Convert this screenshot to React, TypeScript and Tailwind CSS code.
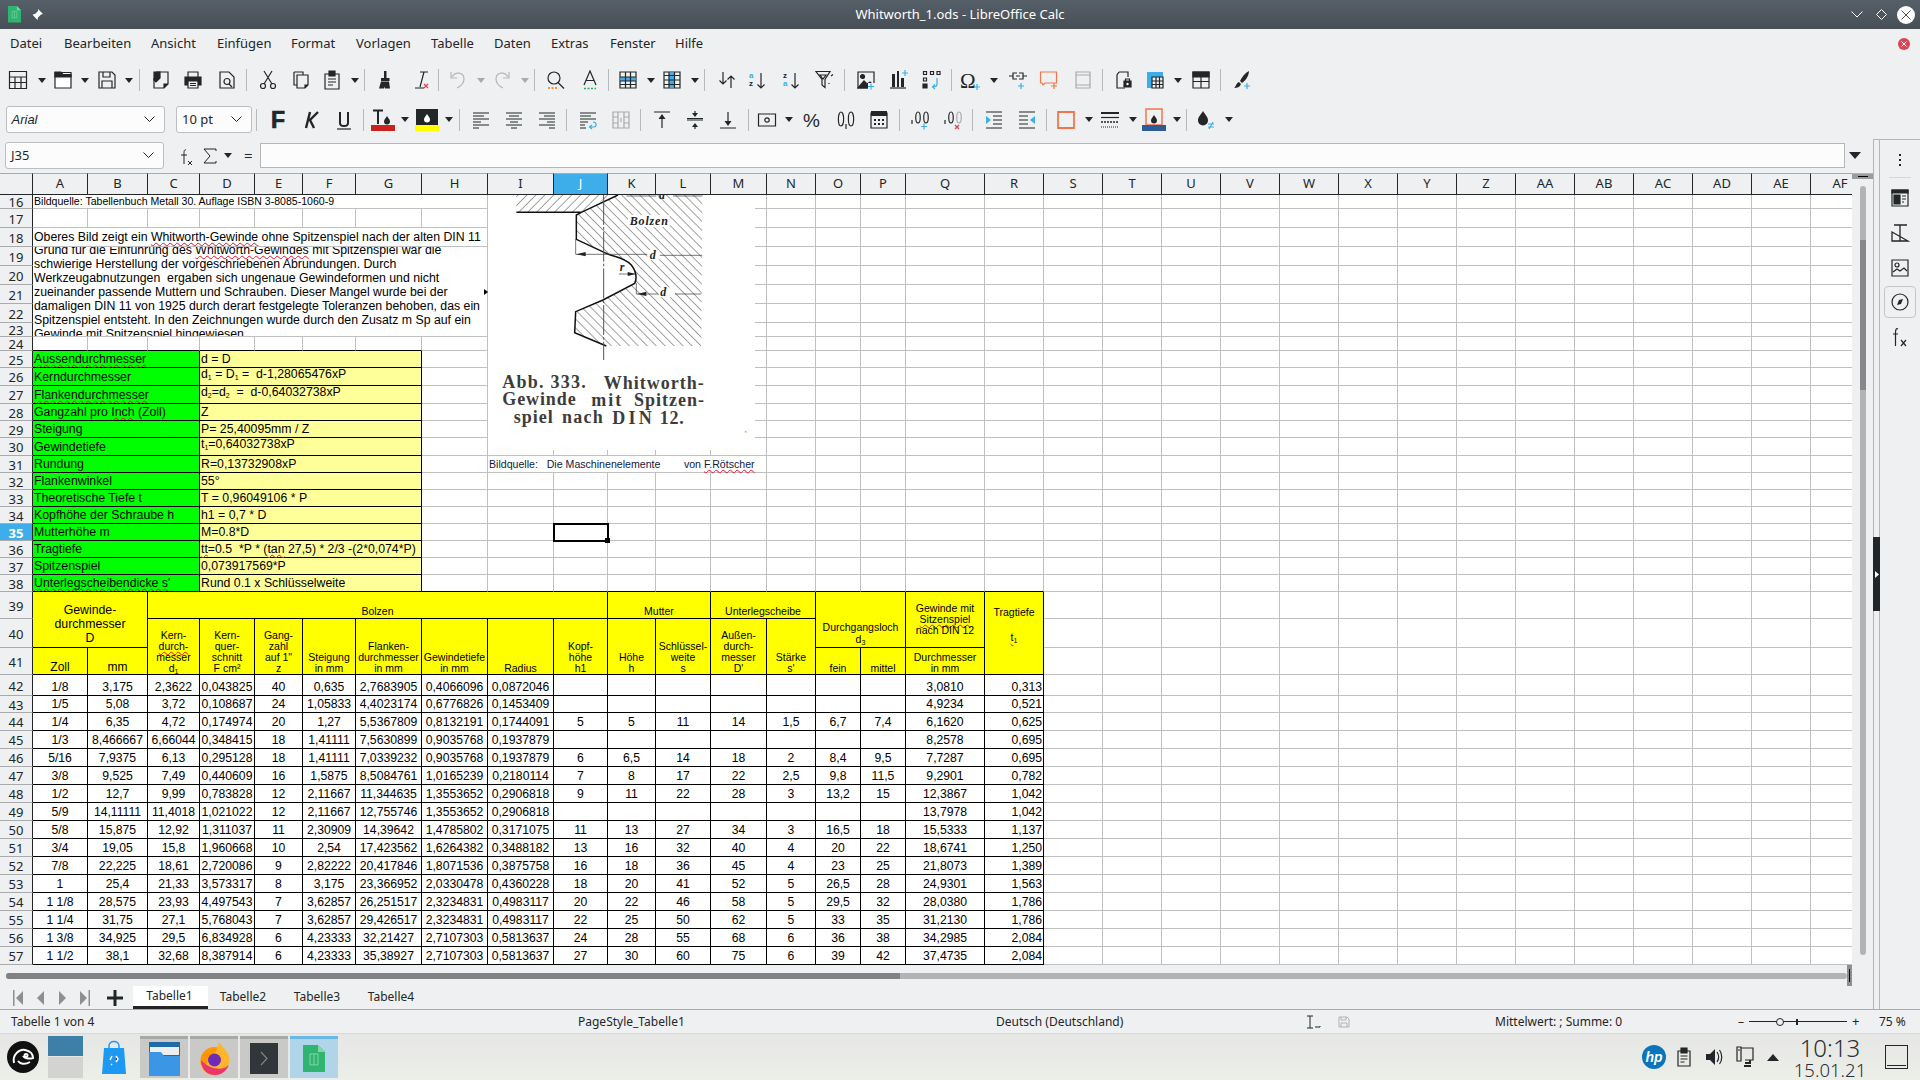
import React from "react";

const D = "#232629";
const B = "#3daee9";
const Svg = ({ children, w = 20, h = 20, vb }: { children?: React.ReactNode; w?: number; h?: number; vb?: string }) => (
  <svg width={w} height={h} viewBox={vb || `0 0 ${w} ${h}`} fill="none" stroke={D} strokeWidth={1.2} className="block shrink-0">
    {children}
  </svg>
);
const Plus = ({ x = 16, y = 16, c = B }: { x?: number; y?: number; c?: string }) => (
  <path d={`M${x - 3} ${y}h6M${x} ${y - 3}v6`} stroke={c} strokeWidth={1.2} />
);
const RedX = ({ x = 16, y = 17 }: { x?: number; y?: number }) => (
  <path d={`M${x - 2} ${y - 2}l4 4M${x + 2} ${y - 2}l-4 4`} stroke="#da4453" strokeWidth={1.3} />
);
const Arrow = () => (
  <svg width="8" height="5" viewBox="0 0 8 5" className="block"><path d="M0 0h8L4 5z" fill={D} /></svg>
);
const Sep = () => <div className="w-px h-[22px] bg-[#b7b9bb]" />;
const Drop = ({ x = 10, y = 9, c = D }: { x?: number; y?: number; c?: string }) => (
  <path d={`M${x} ${y}c-2 3 -3 4 -3 5.500a3 3 0 0 0 6 0c0-1.500 -1 -2.500 -3 -5.500z`} fill={c} stroke="none" />
);

const icons = {
  table: <Svg><path d="M1.500 1.500h17v17h-17zM1.500 7h17M1.500 12.500h17M7 7v11.500M13 7v11.500" /></Svg>,
  open: <Svg><path d="M2 2.500h16v15.500H2z" fill="#fff" /><path d="M2 2h6l2 2.500h8V7H2z" fill={D} /></Svg>,
  save: <Svg><path d="M2 2h13l3 3v13H2zM6 2v5h7V2M5 18v-7h10v7" /></Svg>,
  exportDoc: <Svg><path d="M5 2h12v12l-4 4H3V8" /><path d="M3 2h6v6l-4 4-2-2z" fill={D} /><path d="M13 18v-4h4" fill={D} /></Svg>,
  print: <Svg><path d="M5 7V2h10v5" /><path d="M2 7h16v8H2z" fill={D} /><path d="M5 11h10v7H5z" fill="#eff0f1" /><path d="M7 13.500h6M7 15.500h6" strokeWidth={1} /></Svg>,
  preview: <Svg><path d="M3 2h9l5 5v11H3z" /><circle cx="10" cy="11.500" r="3" /><path d="M12 14l3 3" /></Svg>,
  cut: <Svg><circle cx="5" cy="16" r="2.500" /><circle cx="15" cy="16" r="2.500" /><path d="M6 14L14 1M14 14L6 1" /></Svg>,
  copy: <Svg><path d="M3 2h9v3M3 2v13h3" /><path d="M6 5h11v10l-3 3H6z" fill="#eff0f1" /><path d="M14 18v-3h3" fill={D} /></Svg>,
  paste: <Svg><path d="M3 4h14v15H3z" /><path d="M7 1h6v5H7z" fill={D} /><path d="M6 9h8M6 12h8M6 15h5" /></Svg>,
  clone: <Svg><path d="M9 1h2.500v7H9z" fill={D} stroke="none" /><path d="M6 8h8.500v3H6z" fill={D} stroke="none" /><path d="M6 11.500L4 18.500h5l.5-2 .5 2h5l-1-7z" fill={D} stroke="none" /></Svg>,
  clear: <Svg><path d="M10 2h8M14 2l-4 15M5 18h9" /><RedX x={16} y={16} /></Svg>,
  undo: <Svg><path d="M4 7c3-6 12-5 12 2 0 4-3 7-7 9" stroke="#b5b7b9" /><path d="M3 2v6h6" stroke="#b5b7b9" /></Svg>,
  redo: <Svg><path d="M16 7c-3-6-12-5-12 2 0 4 3 7 7 9" stroke="#b5b7b9" /><path d="M17 2v6h-6" stroke="#b5b7b9" /></Svg>,
  find: <Svg><circle cx="8" cy="8" r="6" /><path d="M12 12.500l6 6" /><path d="M2 18h9" stroke="#f67400" strokeDasharray="2 1.500" strokeWidth={1.5} /></Svg>,
  spell: <Svg><path d="M4 15L10 1l6 14M6 10.500h8" /><path d="M4 18.500h12" stroke="#27ae60" strokeDasharray="2 1.500" strokeWidth={1.6} /></Svg>,
  rows: <Svg><path d="M2 2h16v16H2z" /><path d="M2.500 7h15v4h-15z" fill={B} stroke="none" /><path d="M2 7h16M2 11h16M2 14.500h16M7.500 2v16M12.500 2v16" /></Svg>,
  cols: <Svg><path d="M2 2h16v16H2z" /><path d="M7 2.500h5v15H7z" fill={B} stroke="none" /><path d="M7 2v16M12.500 2v16M2 5.500h16M2 10h16M2 14.500h16" /></Svg>,
  sort: <Svg><path d="M6 2v12M2.500 10.500L6 14l3.500-3.500M14 18V6M10.500 9.500L14 6l3.500 3.500" /></Svg>,
  sortAsc: <Svg><text x="1" y="8" fontSize="8" fill={B} stroke="none" fontFamily="Liberation Sans" fontWeight="700">a</text><text x="1" y="16" fontSize="8" fill={D} stroke="none" fontFamily="Liberation Sans" fontWeight="700">z</text><path d="M13 3v15M9.500 14.500L13 18l3.500-3.500" /></Svg>,
  sortDesc: <Svg><text x="1" y="8" fontSize="8" fill={D} stroke="none" fontFamily="Liberation Sans" fontWeight="700">z</text><text x="1" y="16" fontSize="8" fill={B} stroke="none" fontFamily="Liberation Sans" fontWeight="700">a</text><path d="M13 3v15M9.500 14.500L13 18l3.500-3.500" /></Svg>,
  filter: <Svg><path d="M1 1.500h14l-5 8v8l-3-2.500V9.500z" /><path d="M5 5h6l-3 4z" /><path d="M16 6l2-1.500M14 13v1" stroke="#232629" /></Svg>,
  image: <Svg><path d="M2 2h16v16H2z" /><circle cx="6.500" cy="6.500" r="2" fill={D} /><path d="M2 18l6-7 3 3 3-2 4 4v2z" fill={D} /><path d="M12 13h7v7h-7z" fill="#eff0f1" stroke="none" /><Plus x={15} y={16.500} /></Svg>,
  chart: <Svg><path d="M3 4h3v13H3zM8 1h2v16H8zM12 8h3v9h-3z" fill={D} stroke="none" /><path d="M1 18h16" /><Plus x={16} y={3} /></Svg>,
  pivot: <Svg><path d="M1.500 1.500h3v3h-3zM8.500 1.500h3v3h-3zM15 1.500h3v3h-3zM1.500 8h3v3h-3z" /><path d="M1 14h4v4H1z" fill={D} /><path d="M15 8v6c0 2-2 3-4 3M13 14.500l-2.500 2.500 2.500 2" stroke={B} /></Svg>,
  omega: <Svg><text x="0" y="18" fontSize="21" fill={D} stroke="none" fontFamily="Liberation Serif">Ω</text><Plus x={17} y={17} /></Svg>,
  link: <Svg><path d="M1 6h4M15 6h4" /><path d="M9 3H5v6h4M11 3h4v6h-4M8 6h4" /><Plus x={13} y={16} /></Svg>,
  comment: <Svg><path d="M1.500 2h16v11H6l-2 2-1-2H1.500z" stroke="#f2764b" /><Plus x={15} y={16} c="#f2764b" /></Svg>,
  hf: <Svg><path d="M3 2h14v16H3zM3 5h14M3 15h14" stroke="#a8aaac" /></Svg>,
  area: <Svg><path d="M5 2h9v5M5 2L3 5v13h8" /><path d="M10 11h7v6h-7z" fill={D} /><circle cx="13.500" cy="14" r="1.200" fill="#fff" stroke="none" /><path d="M11.500 11V9h4v2" /></Svg>,
  tblue: <Svg><path d="M2 2h16v5H7v11H2z" fill={B} stroke="none" /><path d="M7 7h11v11H7zM7 11h11M7 14.500h11M11 7v11M14.500 7v11" /></Svg>,
  freeze: <Svg><path d="M2 2h16v16H2z" /><path d="M2 2h16v5H2z" fill={D} /><path d="M2 11.500h16M10 7v11" /></Svg>,
  brush: <Svg><path d="M17 1C13 3 10 7 8 11l2 2c3-2 7-7 7-12z" fill={D} stroke="none" /><path d="M7 12l2 2c-1 3-4 4-7 4 2-1 2-5 5-6z" fill={D} stroke="none" /><Plus x={15} y={16} /></Svg>,
  bold: <Svg><text x="3" y="18" fontSize="23" fontWeight="900" fill={D} stroke={D} strokeWidth={0.7} fontFamily="Liberation Sans">F</text></Svg>,
  ital: <Svg><path d="M8 2L4 18M16 2L8 10l4 8" strokeWidth={2.4} /></Svg>,
  und: <Svg><path d="M6 2v11c0 4 8 4 8 0V2" strokeWidth={2} /><path d="M3 19h14" /></Svg>,
  fcol: <svg width="24" height="22" viewBox="0 0 24 22" fill="none" className="block"><path d="M2 1.500h10M7 1.500V15" stroke={D} strokeWidth={2} /><Drop x={16} y={7} /><path d="M0 16h24v6H0z" fill="#c9211e" /></svg>,
  hcol: <svg width="24" height="22" viewBox="0 0 24 22" fill="none" className="block"><path d="M1 0h22v16H1z" fill={D} /><Drop x={12} y={5} c="#fff" /><path d="M0 16h24v6H0z" fill="#ffff00" /></svg>,
  al: <Svg><path d="M2 3h16M2 6h11M2 9h16M2 12h8M2 15h16M2 18h6" /></Svg>,
  ac: <Svg><path d="M2 3h16M5 6h10M2 9h16M6 12h8M2 15h16M7 18h6" /></Svg>,
  ar: <Svg><path d="M2 3h16M7 6h11M2 9h16M10 12h8M2 15h16M12 18h6" /></Svg>,
  wrap: <Svg><path d="M2 3h16M2 6h11M2 9h16M2 12h8M2 15h5M2 18h6" /><path d="M12 17h4c3 0 3-5-1-5M14 15l-2.500 2 2.500 2" stroke={B} /></Svg>,
  merge: <Svg><path d="M2 2h16v16H2zM2 7h5M13 7h5M2 13h5M13 13h5M7 2v16M13 2v16M10 8v4" stroke="#a8aaac" /></Svg>,
  vt: <Svg><path d="M2 2h16M10 18V6" /><path d="M10 4l-3.500 5h7z" fill={D} stroke="none" /></Svg>,
  vc: <Svg><path d="M2 10h16M2 8.500h16M10 1v3M10 19v-3" /><path d="M10 7L7 3h6zM10 13l-3 4h6z" fill={D} stroke="none" /></Svg>,
  vb: <Svg><path d="M2 18h16M10 2v12" /><path d="M10 16l-3.500-5h7z" fill={D} stroke="none" /></Svg>,
  cur: <Svg><path d="M1.500 4h17v12h-17z" /><circle cx="10" cy="10" r="2.200" /></Svg>,
  pct: <Svg w={20} h={20}><text x="0" y="17" fontSize="19" fill={D} stroke="none" fontFamily="Liberation Sans">%</text></Svg>,
  zero: <Svg><path d="M5 2c-3.500 0-3.500 14 0 14s3.500-14 0-14zM15 2c-3.500 0-3.500 14 0 14s3.500-14 0-14zM10 14v5" /></Svg>,
  date: <Svg><path d="M2 3h16v15H2z" /><path d="M2 1h16v5H2z" fill={D} stroke="none" /><path d="M5 9h2v2H5zM9 9h2v2H9zM13 9h2v2h-2zM5 13h2v2H5zM9 13h2v2H9zM13 13h2v2h-2z" fill={D} stroke="none" /></Svg>,
  addD: <Svg><path d="M8 2c-3 0-3 11 0 11s3-11 0-11zM16 2c-3 0-3 11 0 11s3-11 0-11zM2 10v4" /><Plus x={14} y={16.500} /></Svg>,
  remD: <Svg><path d="M8 2c-3 0-3 11 0 11s3-11 0-11z" /><path d="M16 2c-3 0-3 11 0 11s3-11 0-11z" stroke="#a8aaac" /><path d="M2 10v4" /><RedX x={14} y={17} /></Svg>,
  ind: <Svg><path d="M2 2h16M9 6h9M9 10h9M9 14h9M2 18h16" /><path d="M2 6l5 4-5 4z" fill={B} stroke="none" /></Svg>,
  out: <Svg><path d="M2 2h16M2 6h9M2 10h9M2 14h9M2 18h16" /><path d="M18 6l-5 4 5 4z" fill={B} stroke="none" /></Svg>,
  border: <Svg><path d="M2 2h16v16H2z" stroke="#f2764b" strokeWidth={1.800} /></Svg>,
  bstyle: <Svg><path d="M1 3h18" strokeWidth={2} /><path d="M1 7.500h18" /><path d="M1 12h18" strokeDasharray="2 1" strokeWidth={1.400} /><path d="M1 17h18" strokeDasharray="1 1" /></Svg>,
  bcol: <svg width="24" height="24" viewBox="0 0 24 24" fill="none" className="block"><path d="M4 1h16v16H4z" stroke="#f2764b" strokeWidth={1.500} /><Drop x={12} y={7} /><path d="M0 17h24v6H0z" fill="#2a5d96" /></svg>,
  cond: <Svg><path d="M8 1c-3 5-5 6-5 9.500a5 5 0 0 0 10 0C13 7 11 6 8 1z" fill={D} stroke="none" /><path d="M13 14h6M13 17h6M18 12l-4 7" stroke={B} /></Svg>,
};

type Item = [number, React.ReactNode, number?];
const Bar = ({ items, h }: { items: Item[]; h: string }) => {
  let right = 0;
  return (
    <div className={`flex items-center ${h}`}>
      {items.map(([cx, node, w = 20], i) => {
        const left = cx - w / 2;
        const ml = left - right;
        right = left + w;
        return (
          <div key={i} className="flex justify-center items-center shrink-0" style={{ width: w, marginLeft: ml }}>
            {node}
          </div>
        );
      })}
    </div>
  );
};
const a = <Arrow />;
const s = <Sep />;
const Combo = ({ text, italic }: { text: string; italic?: boolean }) => (
  <div className="h-[27px] w-full bg-[#fcfcfc] border border-[#bcbebf] rounded-[3px] flex items-center justify-between pl-[5px] pr-[9px]">
    <span className={`text-[13px] text-[#232629] ${italic ? "italic font-['Liberation_Sans',sans-serif]" : ""}`}>{text}</span>
    <svg width="11" height="7" viewBox="0 0 11 7" fill="none" stroke={D} strokeWidth={1}><path d="M0.500 0.500l5 5 5-5" /></svg>
  </div>
);

const grayArrow = <svg width="8" height="5" viewBox="0 0 8 5" className="block"><path d="M0 0h8L4 5z" fill="#a8aaac" /></svg>;
const t1: Item[] = [
  [18, icons.table], [42, a, 8], [62.5, icons.open], [85, a, 8], [107, icons.save], [129, a, 8], [139, s, 1],
  [161, icons.exportDoc], [193, icons.print], [227, icons.preview], [246.5, s, 1], [268, icons.cut], [301, icons.copy],
  [332, icons.paste], [355, a, 8], [364, s, 1], [385, icons.clone], [420, icons.clear], [438, s, 1], [458, icons.undo],
  [481, grayArrow, 8], [502, icons.redo], [525, grayArrow, 8],
  [534, s, 1], [556, icons.find], [590, icons.spell], [608, s, 1], [628, icons.rows], [650.5, a, 8], [672, icons.cols], [695, a, 8],
  [704.5, s, 1], [726.5, icons.sort], [758, icons.sortAsc], [792, icons.sortDesc], [824.5, icons.filter], [844.5, s, 1],
  [866, icons.image], [899, icons.chart], [932, icons.pivot], [951, s, 1], [970, icons.omega], [993.5, a, 8], [1017.5, icons.link],
  [1049, icons.comment], [1083, icons.hf], [1102.5, s, 1], [1124, icons.area], [1155, icons.tblue], [1177.5, a, 8], [1201, icons.freeze],
  [1220, s, 1], [1242, icons.brush],
];
const t2: Item[] = [
  [85, <Combo text="Arial" italic />, 159], [214, <Combo text="10 pt" />, 76], [256, s, 1], [277.5, icons.bold], [312, icons.ital], [344, icons.und],
  [363, s, 1], [383, icons.fcol, 24], [405, a, 8], [427, icons.hcol, 24], [449, a, 8], [459, s, 1], [481, icons.al], [514, icons.ac], [547, icons.ar],
  [566.5, s, 1], [588, icons.wrap], [621, icons.merge], [640, s, 1], [661.5, icons.vt], [695, icons.vc], [728, icons.vb], [748, s, 1], [766.5, icons.cur],
  [789, a, 8], [813, icons.pct], [846, icons.zero], [879, icons.date], [899, s, 1], [919.5, icons.addD], [953, icons.remD], [972.5, s, 1], [994, icons.ind],
  [1027, icons.out], [1046.5, s, 1], [1066, icons.border], [1088.5, a, 8], [1110, icons.bstyle], [1132.5, a, 8], [1154, icons.bcol, 24], [1177, a, 8],
  [1186.5, s, 1], [1205, icons.cond], [1228.5, a, 8],
];

const menus: [string, number][] = [["Datei", 54], ["Bearbeiten", 87], ["Ansicht", 66], ["Einfügen", 74], ["Format", 65], ["Vorlagen", 75], ["Tabelle", 63], ["Daten", 57], ["Extras", 59], ["Fenster", 65], ["Hilfe", 50]];

const cols = ["A","B","C","D","E","F","G","H","I","J","K","L","M","N","O","P","Q","R","S","T","U","V","W","X","Y","Z","AA","AB","AC","AD","AE","AF"];

const W = ({ children }: { children: React.ReactNode }) => (
  <span className="underline decoration-wavy decoration-[#e8102a] decoration-1 underline-offset-[1px] [text-decoration-skip-ink:none]">{children}</span>
);
const Sb = ({ children }: { children: React.ReactNode }) => <sub className="text-[7px]">{children}</sub>;

type Cell = { r: number; c: number; rs?: number; cs?: number; cls?: string; n?: React.ReactNode };
const SANS = "font-['Liberation_Sans',sans-serif]";
const Y = "bg-[#ffff00] border-r border-b border-black";
const hdr = `${Y} flex items-end justify-center text-center text-[10.5px] leading-[11px] text-black`;
const Lines = ({ t }: { t: React.ReactNode[] }) => (
  <div>{t.map((x, i) => <div key={i}>{x}</div>)}</div>
);

const cells: Cell[] = [];
const add = (r: number, c: number, n?: React.ReactNode, cls?: string, cs?: number, rs?: number) => cells.push({ r, c, n, cls, cs, rs });

add(16, 0, <span className="text-[10.55px]">Bildquelle: Tabellenbuch Metall 30. Auflage ISBN 3-8085-1060-9</span>, "border-r border-b border-[#c0c0c0] flex items-center pl-[1px] whitespace-nowrap", 8);
add(18, 0, <span><span>Oberes Bild zeigt ein </span><W>Whitworth-Gewinde</W> ohne Spitzenspiel nach der alten DIN 11</span>, "border-r border-b border-[#c0c0c0] flex items-center pl-[1px] whitespace-nowrap text-[12.3px] leading-[16px]", 8);
add(19, 0, (
  <div className="text-[12.3px] leading-[14px] whitespace-nowrap">
    <div>Grund für die Einführung des <W>Whitworth-Gewindes</W> mit Spitzenspiel war die</div>
    <div>schwierige Herstellung der vorgeschriebenen Abrundungen. Durch</div>
    <div>Werkzeugabnutzungen&nbsp; ergaben sich ungenaue Gewindeformen und nicht</div>
    <div>zueinander passende Muttern und Schrauben. Dieser Mangel wurde bei der</div>
    <div>damaligen DIN 11 von 1925 durch derart festgelegte Toleranzen behoben, das ein</div>
    <div>Spitzenspiel entsteht. In den Zeichnungen wurde durch den Zusatz m Sp auf ein</div>
    <div>Gewinde mit Spitzenspiel hingewiesen.</div>
  </div>
), "border-r border-b border-[#c0c0c0] flex items-center pl-[1px] overflow-hidden", 8, 5);

const left: [React.ReactNode, React.ReactNode][] = [
  [<W>Aussendurchmesser</W>, "d = D"],
  ["Kerndurchmesser", <span className="relative -top-[3px]">d<Sb>1</Sb> = D<Sb>1</Sb> =&nbsp; d-1,28065476xP</span>],
  [<W>Flankendurchmesser</W>, <span className="relative -top-[3px]">d<Sb>2</Sb>=d<Sb>2</Sb>&nbsp; =&nbsp; d-0,64032738xP</span>],
  [<span>Gangzahl pro <W>Inch</W> (Zoll)</span>, "Z"],
  ["Steigung", "P= 25,40095mm / Z"],
  ["Gewindetiefe", <span className="relative -top-[3px]">t<Sb>1</Sb>=0,64032738xP</span>],
  ["Rundung", "R=0,13732908xP"],
  ["Flankenwinkel", "55°"],
  ["Theoretische Tiefe t", "T = 0,96049106 * P"],
  ["Kopfhöhe der Schraube h", "h1 = 0,7 * D"],
  ["Mutterhöhe m", "M=0.8*D"],
  ["Tragtiefe", <span><W>tt</W>=0.5&nbsp; *P * (<W>tan</W> 27,5) * 2/3 -(2*0,074*P)</span>],
  ["Spitzenspiel", "0,073917569*P"],
  [<W>Unterlegscheibendicke s'</W>, "Rund 0.1 x Schlüsselweite"],
];
left.forEach(([l, v], i) => {
  const r = 25 + i;
  add(r, 0, l, "bg-[#00ff00] border-r border-b border-black flex items-end pl-[1px] text-[12.3px] leading-[16px] whitespace-nowrap overflow-hidden", 3);
  add(r, 3, v, "bg-[#ffff99] border-r border-b border-black flex items-end pl-[1px] text-[12.3px] leading-[16px] whitespace-nowrap", 4);
});

add(31, 8, <span className="whitespace-pre">{"Bildquelle:   Die Maschinenelemente        von "}<W>F.Rötscher</W></span>, "border-r border-b border-[#c0c0c0] flex items-center pl-[1px] pt-[1px] text-[10.6px] whitespace-nowrap text-[#10183c]", 5);

add(39, 0, <div className="text-[12.3px] leading-[14px]"><div>Gewinde-</div><div>durchmesser</div><div>D</div></div>, `${Y} flex items-center justify-center text-center pt-[8px]`, 2, 2);
add(41, 0, "Zoll", `${Y} flex items-end justify-center text-[12px] leading-[14px]`);
add(41, 1, "mm", `${Y} flex items-end justify-center text-[12px] leading-[14px]`);
const top = `${Y} flex items-end justify-center text-[10.5px] leading-[11px] pb-[1px]`;
add(39, 2, "Bolzen", top, 8);
add(39, 10, "Mutter", top, 2);
add(39, 12, "Unterlegscheibe", top, 2);
add(39, 14, <Lines t={["Durchgangsloch", <span>d<Sb>3</Sb></span>]} />, `${Y} flex items-end justify-center text-center text-[10.5px] leading-[12px] pb-[2px]`, 2, 2);
add(39, 16, <Lines t={["Gewinde mit", <W>Sitzenspiel</W>, "nach DIN 12"]} />, `${Y} flex items-center justify-center text-center text-[10.5px] leading-[11px] pb-[1px]`, 1, 2);
add(39, 17, <div><div className="h-[27px] flex items-end justify-center pb-[1px]">Tragtiefe</div><div className="mt-[13px]"><W>t</W><Sb>1</Sb></div></div>, `${Y} text-center text-[10.5px] leading-[11px]`, 1, 3);
const h4: [number, React.ReactNode[]][] = [
  [2, ["Kern-", <W>durch-</W>, "messer", <span>d<Sb>1</Sb></span>]],
  [3, ["Kern-", "quer-", "schnitt", <span>F cm²</span>]],
  [4, ["Gang-", "zahl", 'auf 1"', "z"]],
  [5, ["Steigung", "in mm"]],
  [6, ["Flanken-", "durchmesser", "in mm"]],
  [7, ["Gewindetiefe", "in mm"]],
  [8, ["Radius"]],
  [9, ["Kopf-", "höhe", "h1"]],
  [10, ["Höhe", "h"]],
  [11, ["Schlüssel-", "weite", "s"]],
  [12, ["Außen-", "durch-", "messer", "D'"]],
  [13, ["Stärke", "s'"]],
];
h4.forEach(([c, t]) => add(40, c, <Lines t={t} />, hdr, 1, 2));
add(41, 14, "fein", hdr);
add(41, 15, "mittel", hdr);
add(41, 16, <Lines t={["Durchmesser", "in mm"]} />, hdr);

const data: string[][] = [
  ["1/8","3,175","2,3622","0,043825","40","0,635","2,7683905","0,4066096","0,0872046","","","","","","","","3,0810","0,313"],
  ["1/5","5,08","3,72","0,108687","24","1,05833","4,4023174","0,6776826","0,1453409","","","","","","","","4,9234","0,521"],
  ["1/4","6,35","4,72","0,174974","20","1,27","5,5367809","0,8132191","0,1744091","5","5","11","14","1,5","6,7","7,4","6,1620","0,625"],
  ["1/3","8,466667","6,66044","0,348415","18","1,41111","7,5630899","0,9035768","0,1937879","","","","","","","","8,2578","0,695"],
  ["5/16","7,9375","6,13","0,295128","18","1,41111","7,0339232","0,9035768","0,1937879","6","6,5","14","18","2","8,4","9,5","7,7287","0,695"],
  ["3/8","9,525","7,49","0,440609","16","1,5875","8,5084761","1,0165239","0,2180114","7","8","17","22","2,5","9,8","11,5","9,2901","0,782"],
  ["1/2","12,7","9,99","0,783828","12","2,11667","11,344635","1,3553652","0,2906818","9","11","22","28","3","13,2","15","12,3867","1,042"],
  ["5/9","14,11111","11,4018","1,021022","12","2,11667","12,755746","1,3553652","0,2906818","","","","","","","","13,7978","1,042"],
  ["5/8","15,875","12,92","1,311037","11","2,30909","14,39642","1,4785802","0,3171075","11","13","27","34","3","16,5","18","15,5333","1,137"],
  ["3/4","19,05","15,8","1,960668","10","2,54","17,423562","1,6264382","0,3488182","13","16","32","40","4","20","22","18,6741","1,250"],
  ["7/8","22,225","18,61","2,720086","9","2,82222","20,417846","1,8071536","0,3875758","16","18","36","45","4","23","25","21,8073","1,389"],
  ["1","25,4","21,33","3,573317","8","3,175","23,366952","2,0330478","0,4360228","18","20","41","52","5","26,5","28","24,9301","1,563"],
  ["1 1/8","28,575","23,93","4,497543","7","3,62857","26,251517","2,3234831","0,4983117","20","22","46","58","5","29,5","32","28,0380","1,786"],
  ["1 1/4","31,75","27,1","5,768043","7","3,62857","29,426517","2,3234831","0,4983117","22","25","50","62","5","33","35","31,2130","1,786"],
  ["1 3/8","34,925","29,5","6,834928","6","4,23333","32,21427","2,7107303","0,5813637","24","28","55","68","6","36","38","34,2985","2,084"],
  ["1 1/2","38,1","32,68","8,387914","6","4,23333","35,38927","2,7107303","0,5813637","27","30","60","75","6","39","42","37,4735","2,084"],
];
data.forEach((row, i) => row.forEach((v, c) => {
  add(42 + i, c, v, `bg-white border-r border-b border-black flex items-end ${c === 17 ? "justify-end pr-[1px]" : "justify-center"} text-[12.2px] leading-[16px] whitespace-nowrap`);
}));

const occupied = new Set<string>();
cells.forEach((x) => {
  for (let r = x.r; r < x.r + (x.rs || 1); r++) for (let c = x.c; c < x.c + (x.cs || 1); c++) occupied.add(`${r}-${c}`);
});
for (let r = 16; r <= 57; r++) for (let c = 0; c < 32; c++) {
  if (occupied.has(`${r}-${c}`)) continue;
  const darkB = (r === 24 && c <= 6) || (r === 38 && c >= 7 && c <= 17);
  const darkR = c === 18 - 1 && r >= 39;
  cells.push({ r, c, cls: `border-r border-b ${darkB ? "border-b-black" : "border-b-[#c0c0c0]"} ${darkR ? "border-r-black" : "border-r-[#c0c0c0]"}` });
}

const Drawing = () => (
  <svg width="267" height="255" viewBox="25 75 801 765" fill="none" className="block">
    <defs>
      <pattern id="ha" width="19" height="19" patternUnits="userSpaceOnUse" patternTransform="rotate(-45)">
        <path d="M0 0v19" stroke="#2a2a2a" strokeWidth="2.600" />
      </pattern>
      <pattern id="hb" width="19" height="19" patternUnits="userSpaceOnUse" patternTransform="rotate(45)">
        <path d="M0 0v19" stroke="#2a2a2a" strokeWidth="2.600" />
      </pattern>
    </defs>
    <path d="M110 75H400L305 127H110z" fill="url(#hb)" />
    <path d="M668 75H415L305 127L290 135V208L375 248L430 265L465 295L468 340L370 390L288 425L285 488L380 528H665z" fill="url(#ha)" />
    <path d="M110 127H305L415 75M305 127L290 135V208L375 248C400 262 430 258 455 285C470 305 472 325 465 340L370 390L288 425L285 488L380 528" stroke="#111" strokeWidth="4.500" />
    <path d="M372 75V570" stroke="#555" strokeWidth="3" strokeDasharray="90 6 8 6" />
    <path d="M288 208V253H505M540 256H668M470 340V372H535M585 372H665M440 78H530M580 78H668" stroke="#333" strokeWidth="2" />
    <path d="M290 253l28-7v13zM472 372l28-7v13z" fill="#222" />
    <path d="M418 312h48" stroke="#333" strokeWidth="2" />
    <path d="M468 312l-24-6v12z" fill="#222" />
    <g fontFamily="Liberation Serif, serif" fontStyle="italic" fontSize="36" fill="#222" fontWeight="700" stroke="none">
      <rect x="445" y="135" width="125" height="36" fill="#fff" />
      <rect x="503" y="240" width="36" height="30" fill="#fff" />
      <rect x="538" y="352" width="48" height="30" fill="#fff" />
      <text x="450" y="165" textLength="115">Bolzen</text>
      <text x="510" y="266">d</text>
      <text x="420" y="303">r</text>
      <text x="542" y="378">d</text>
      <text x="538" y="88">d</text>
    </g>
    <g fontFamily="Liberation Serif, serif" fontWeight="700" fontSize="54" fill="#3c3c3c" stroke="none">
      <text x="68" y="653" textLength="250" lengthAdjust="spacing">Abb. 333.</text>
      <text x="372" y="656" textLength="300" lengthAdjust="spacing">Whitworth-</text>
      <text x="68" y="705" textLength="220" lengthAdjust="spacing">Gewinde</text>
      <text x="335" y="707" textLength="90" lengthAdjust="spacing">mit</text>
      <text x="463" y="708" textLength="210" lengthAdjust="spacing">Spitzen-</text>
      <text x="102" y="758" textLength="117" lengthAdjust="spacing">spiel</text>
      <text x="247" y="759" textLength="122" lengthAdjust="spacing">nach</text>
      <text x="398" y="761" textLength="118" lengthAdjust="spacing">DIN</text>
      <text x="540" y="762" textLength="72" lengthAdjust="spacing">12.</text>
    </g>
    <circle cx="798" cy="785" r="3" fill="#f5a742" />
  </svg>
);

const Sheet = () => (
  <div className="relative w-[1852px] h-[792px] overflow-hidden bg-white">
    <div className={`grid ${SANS} text-black grid-cols-[33px_55px_60px_52px_55px_48px_53px_66px_66px_66px_54px_48px_55px_56px_49px_45px_45px_79px_59px_59px_59px_59px_59px_59px_59px_59px_59px_59px_59px_59px_59px_59px_59px] grid-rows-[22px_14px_19px_19px_19px_19px_19px_19px_14px_14px_17px_18px_18px_17px_17px_18px_17px_17px_17px_17px_17px_17px_17px_17px_27px_29px_27px_21px_17px_18px_18px_18px_18px_18px_18px_18px_18px_18px_18px_18px_18px_18px_18px] w-max`}>
      <div className="bg-[#eff0f1] border-t border-t-[#a8aaac] border-r border-b border-r-[#232629] border-b-[#232629]" style={{ gridRow: 1, gridColumn: 1 }} />
      {cols.map((c, i) => (
        <div key={c} style={{ gridRow: 1, gridColumn: i + 2 }} className={`font-['Noto_Sans',sans-serif] text-[13px] flex items-center justify-center border-t border-t-[#a8aaac] border-r border-b border-r-[#232629] border-b-[#232629] ${c === "J" ? "bg-[#3daee9] text-white" : "bg-[#eff0f1] text-[#232629]"}`}>{c}</div>
      ))}
      {Array.from({ length: 42 }, (_, i) => {
        const r = i + 16;
        return (
          <div key={r} style={{ gridRow: i + 2, gridColumn: 1 }} className={`font-['Noto_Sans',sans-serif] text-[13px] leading-none pt-[2px] flex items-center justify-center overflow-hidden border-r border-b border-r-[#232629] border-b-[#a8aaac] ${r === 35 ? "bg-[#3daee9] text-white font-bold" : "bg-[#eff0f1] text-[#232629]"}`}>{r}</div>
        );
      })}
      {cells.map((x) => (
        <div
          key={`${x.r}-${x.c}`}
          className={`${x.cls || ""} min-w-0 min-h-0`}
          style={{ gridRow: `${x.r - 14} / span ${x.rs || 1}`, gridColumn: `${x.c + 2} / span ${x.cs || 1}` }}
        >
          {x.n}
        </div>
      ))}
    </div>
    {/* floating picture anchored over the sheet */}
    <div className="absolute left-[488px] top-[22px] bg-white"><Drawing /></div>
    {/* overflow marker */}
    <svg width="4" height="6" viewBox="0 0 4 6" className="absolute left-[484px] top-[116px]"><path d="M0 0l4 3-4 3z" fill="#000" /></svg>
    {/* cell cursor */}
    <div className="absolute left-[553px] top-[350px] w-[56px] h-[19px] border-2 border-black" />
    <div className="absolute left-[605px] top-[365px] w-[5px] h-[5px] bg-black" />
  </div>
);

const TaskBtn = ({ children, active }: { children: React.ReactNode; active?: boolean }) => (
  <div className={`w-[48px] h-[42px] flex flex-col shrink-0 ${active ? "bg-[#b0d4e8]" : "bg-[#c9cac7]"}`}>
    <div className={`h-[3px] ${active ? "bg-[#6ab8e4]" : "bg-[#a8a9a6]"}`} />
    <div className="flex-1 flex items-center justify-center">{children}</div>
  </div>
);

const LoDoc = ({ size = 22 }: { size?: number }) => (
  <svg width={size} height={size * 1.27} viewBox="0 0 22 28" className="block">
    <path d="M0 0h15l7 7v21H0z" fill="#2fb56f" />
    <path d="M15 0l7 7h-7z" fill="#7fd6a6" />
    <path d="M7 9h8v11H7z" fill="none" stroke="#7fd6a6" strokeWidth="1" />
    <path d="M11 9v11" stroke="#7fd6a6" strokeWidth="1" />
  </svg>
);

export default function App() {
  return (
    <div className="w-[1920px] h-[1080px] overflow-hidden flex flex-col font-['Noto_Sans',sans-serif] text-[#232629] bg-[#eff0f1]">
      {/* title bar */}
      <div className="h-[29px] shrink-0 flex items-center bg-gradient-to-b from-[#566069] to-[#474e55]">
        <div className="w-[100px] flex items-center pl-[8px] shrink-0">
          <LoDoc size={13} />
          <svg width="14" height="14" viewBox="0 0 14 14" className="ml-[9px]"><path d="M8 1l5 5-2 .5-3 3 -.5 2.500-2.500-2.500-3 3.500 3-3.500L2.500 6.500 5 6l3-3z" fill="#fff" /></svg>
        </div>
        <div className="flex-1 text-center text-white text-[13px]">Whitworth_1.ods - LibreOffice Calc</div>
        <div className="w-[100px] flex items-center justify-end pr-[5px] shrink-0">
          <svg width="12" height="7" viewBox="0 0 12 7" fill="none" stroke="#fff" strokeWidth="1" className="mr-[13px]"><path d="M.5.5l5.500 5.500 5.500-5.500" /></svg>
          <svg width="11" height="11" viewBox="0 0 11 11" fill="none" stroke="#fff" strokeWidth="1" className="mr-[10px]"><path d="M5.500.5l5 5-5 5-5-5z" /></svg>
          <div className="w-[18px] h-[18px] rounded-full bg-white flex items-center justify-center">
            <svg width="10" height="10" viewBox="0 0 10 10" stroke="#4d4d4d" strokeWidth="1"><path d="M.5.5l9 9M9.500.5l-9 9" /></svg>
          </div>
        </div>
      </div>
      {/* menu */}
      <div className="h-[30px] shrink-0 flex items-center pl-[10px]">
        {menus.map(([m, w]) => <div key={m} className="text-[13px] shrink-0" style={{ width: w }}>{m}</div>)}
        <div className="flex-1" />
        <div className="w-[12px] h-[12px] rounded-full bg-[#da4453] flex items-center justify-center mr-[10px]">
          <svg width="6" height="6" viewBox="0 0 6 6" stroke="#fff" strokeWidth="1"><path d="M.5.5l5 5M5.500.5l-5 5" /></svg>
        </div>
      </div>
      <Bar items={t1} h="h-[42px] shrink-0" />
      <div className="flex flex-1 min-h-0">
        <div className="flex flex-col w-[1873px] shrink-0">
          <Bar items={t2} h="h-[37px] shrink-0" />
          <div className="h-[35px] shrink-0 flex items-center">
            <div className="w-[159px] ml-[5px]"><Combo text="J35" /></div>
            <svg width="16" height="18" viewBox="0 0 16 18" className="ml-[15px]" fill="none" stroke={D}><path d="M7 3C5 2 5 5 5 7v10M2 8h6M9 14l4 4M13 14l-4 4" /></svg>
            <svg width="14" height="16" viewBox="0 0 14 16" className="ml-[8px]" fill="none" stroke={D}><path d="M13 3V1H1l6 7-6 7h12v-2" /></svg>
            <div className="ml-[7px]"><Arrow /></div>
            <span className="ml-[12px] text-[15px]">=</span>
            <div className="ml-[7px] w-[1585px] h-[25px] bg-[#fcfcfc] border border-[#b4b6b8]" />
            <svg width="12" height="7" viewBox="0 0 12 7" className="ml-[4px]"><path d="M0 0h12L6 7z" fill={D} /></svg>
          </div>
          <div className="flex h-[792px] shrink-0">
            <Sheet />
            <div className="w-[21px] h-full bg-[#eff0f1] border-t border-[#b4b6b8] flex flex-col items-center relative">
              <div className="w-full h-[5px] bg-[#9a9c9e] flex items-center justify-center"><div className="w-[10px] h-px bg-black" /></div>
              <div className="relative w-[6px] h-[769px] mt-[7px] rounded-[3px] bg-[#b1b3b5]">
                <div className="absolute left-0 top-[54px] w-[6px] h-[150px] bg-[#85878a]" />
              </div>
            </div>
          </div>
          <div className="h-[21px] shrink-0 flex items-center relative">
            <div className="ml-[6px] h-[6px] w-[1841px] rounded-[3px] bg-[#b1b3b5] relative">
              <div className="h-full w-[894px] bg-[#808285] rounded-l-[3px]" />
            </div>
            <div className="w-[5px] h-[21px] bg-[#8d8f91] flex items-center justify-center"><div className="w-px h-[13px] bg-black" /></div>
          </div>
          <div className="h-[23px] shrink-0 flex items-stretch">
            <div className="w-[133px] flex items-center">
              <svg width="12" height="16" viewBox="0 0 12 16" className="ml-[12px]"><path d="M1 0h1.500v16H1zM11 1v14L4 8z" fill="#8d8f91" /></svg>
              <svg width="9" height="16" viewBox="0 0 9 16" className="ml-[11.500px]"><path d="M8 1v14L1 8z" fill="#8d8f91" /></svg>
              <svg width="9" height="16" viewBox="0 0 9 16" className="ml-[13.500px]"><path d="M1 1v14l7-7z" fill="#8d8f91" /></svg>
              <svg width="12" height="16" viewBox="0 0 12 16" className="ml-[12px]"><path d="M9.500 0H11v16H9.500zM1 1v14l7-7z" fill="#8d8f91" /></svg>
              <svg width="16" height="16" viewBox="0 0 16 16" className="ml-[16px]"><path d="M6.500 0h3v6.500H16v3H9.500V16h-3V9.500H0v-3h6.500z" fill={D} /></svg>
            </div>
            <div className="w-[75px] bg-white border-b-[3px] border-[#232629] flex items-center justify-center text-[12px] pr-[2px]">Tabelle1</div>
            <div className="flex -ml-[2px]">
              {["Tabelle2", "Tabelle3", "Tabelle4"].map((t) => <div key={t} className="w-[74px] flex items-center justify-center text-[12px] pb-[2px]">{t}</div>)}
            </div>
          </div>
        </div>
        {/* sidebar */}
        <div className="flex-1 flex border-t border-[#b4b6b8] relative mt-[38px]">
          <div className="w-[7px] border-x border-[#b4b6b8] relative">
            <div className="absolute -left-px top-[397px] w-[7px] h-[74px] bg-[#232629] flex items-center justify-center">
              <svg width="4" height="7" viewBox="0 0 4 7"><path d="M0 0l4 3.500L0 7z" fill="#fff" /></svg>
            </div>
          </div>
          <div className="flex-1 flex flex-col items-center">
            <div className="mt-[14px] flex flex-col gap-[3px]">
              <div className="w-[2px] h-[2px] bg-[#232629]" /><div className="w-[2px] h-[2px] bg-[#232629]" /><div className="w-[2px] h-[2px] bg-[#232629]" />
            </div>
            <div className="mt-[11px] w-[22px] h-px bg-[#d4d6d8]" />
            <div className="mt-[10px]"><Svg><path d="M2 2h16v16H2z" /><path d="M2 2h16v3H2zM4 7h6v9H4z" fill={D} /><path d="M12 8h4M12 11h4M12 14h2" /></Svg></div>
            <div className="mt-[15px]"><Svg><path d="M4 2h13M10 2v16M2 9l16 9H2z" strokeWidth={1.300} /></Svg></div>
            <div className="mt-[15px]"><Svg><path d="M2 2h16v16H2z" /><circle cx="7" cy="7" r="2" /><path d="M3 14l4-3 3 2 4-3 3 3" /></Svg></div>
            <div className="mt-[8px] w-[32px] h-[32px] rounded-[4px] border border-[#c4c6c8] flex items-center justify-center">
              <Svg><circle cx="10" cy="10" r="8" /><path d="M13 7l-4 1-2 5 4-1z" fill={D} stroke="none" /></Svg>
            </div>
            <div className="mt-[9px]"><Svg><path d="M8 2C6 1 5.500 3 5.500 6v13M3 7h5M11 13l5 6M16 13l-5 6" /></Svg></div>
          </div>
        </div>
      </div>
      {/* status bar */}
      <div className="h-[24px] shrink-0 flex items-center border-t border-[#a8aaac] text-[12px] relative">
        <span className="w-[578px] pl-[11px]">Tabelle 1 von 4</span>
        <span className="w-[418px]">PageStyle_Tabelle1</span>
        <span className="w-[309px] text-[12px]">Deutsch (Deutschland)</span>
        <svg width="18" height="14" viewBox="0 0 18 14" fill="none" stroke={D}><path d="M2 1h6M2 13h6M5 1v12M10 12h5v-1" /></svg>
        <svg width="12" height="12" viewBox="0 0 12 12" fill="none" stroke="#b0b2b4" className="ml-[15px]"><path d="M1 1h8l2 2v8H1zM3 1v3h5V1M3 11V7h6v4" /></svg>
        <span className="ml-[145px] w-[243px]">Mittelwert: ; Summe: 0</span>
        <span className="w-[11px]">–</span>
        <div className="relative w-[98px] h-px bg-[#232629] flex items-center">
          <div className="absolute left-[27px] w-[8px] h-[8px] rounded-full bg-[#eff0f1] border border-[#232629]" />
          <div className="absolute left-[47px] w-[2px] h-[6px] bg-[#232629]" />
        </div>
        <span className="ml-[5px] w-[27px] text-[13px]">+</span>
        <span>75 %</span>
      </div>
      {/* taskbar */}
      <div className="h-[47px] shrink-0 flex items-center bg-gradient-to-b from-[#e6e7e5] to-[#eceee8] border-t border-[#d8dad6]">
        <div className="w-[32px] h-[32px] rounded-full bg-[#111] ml-[7px] flex items-center justify-center shrink-0">
          <svg width="24" height="20" viewBox="0 0 24 20" fill="none" stroke="#fff" strokeWidth="2"><path d="M3 16C1 8 8 2 14 3c6 1 8 5 8 8-3 1-8 1-10-2M15 7a1.500 1.500 0 1 0 .1 0" /><path d="M7 14c2 3 7 4 12 1" /></svg>
        </div>
        <div className="w-[35px] h-[42px] ml-[9px] flex flex-col shrink-0">
          <div className="h-[20px] bg-[#3d7fa6]" />
          <div className="h-px bg-[#e6e7e5]" />
          <div className="flex-1 bg-[#d3d4d1]" />
        </div>
        <div className="w-[57px] pl-[5px] flex justify-center shrink-0">
          <svg width="24" height="34" viewBox="0 0 24 34"><path d="M7 9V6c0-6 10-6 10 0v3" fill="none" stroke="#1d99f3" strokeWidth="1.500" /><path d="M2 8h20l2 26H0z" fill="#1d99f3" /><path d="M10 16l-2 4M14 16l2 3-2 3M9 25l1-1" stroke="#fff" strokeWidth="1.500" /></svg>
        </div>
        <TaskBtn><svg width="31" height="34" viewBox="0 0 31 34"><path d="M0 0h31v30H0z" fill="#1f6aa8" /><path d="M1 5h29v8H1z" fill="#eee" /><path d="M0 10h12l3 4h16v20H0z" fill="#3b96e6" /></svg></TaskBtn>
        <div className="w-[2px]" />
        <TaskBtn><svg width="31" height="34" viewBox="0 0 31 34"><circle cx="15.500" cy="19" r="14" fill="#ff9500" /><path d="M20 0c4 6 8 8 10 14 2 9-6 19-15 19C7 33 1 26 1 18c2 8 10 4 8-2 3 0 9-5 11-16z" fill="#ffb52a" /><path d="M2 18C2 27 8 33 16 33c7 0 12-5 14-10-5 6-20 5-28-5z" fill="#e8356c" /><circle cx="15.500" cy="18" r="6.500" fill="#6f2bb5" /></svg></TaskBtn>
        <div className="w-[2px]" />
        <TaskBtn><svg width="28" height="31" viewBox="0 0 28 31"><path d="M0 0h28v31H0z" fill="#31363b" /><path d="M11 9l6 6.500-6 6.500" fill="none" stroke="#7e8388" strokeWidth="1.200" /></svg></TaskBtn>
        <div className="w-[2px]" />
        <TaskBtn active><LoDoc size={22} /></TaskBtn>
        <div className="flex-1" />
        <div className="w-[24px] h-[24px] rounded-full bg-[#0a74bd] flex items-center justify-center text-white text-[14px] italic font-bold font-['Liberation_Sans',sans-serif] shrink-0">hp</div>
        <div className="ml-[10px]"><Svg w={16} h={20}><path d="M2 4h12v15H2z" /><path d="M5 1h6v5H5z" fill={D} /><path d="M4.500 9h7M4.500 12h7M4.500 15h4" /></Svg></div>
        <div className="ml-[13px]"><Svg w={18} h={20}><path d="M1 7h4l5-5v16l-5-5H1z" fill={D} stroke="none" /><path d="M12 5c2 3 2 7 0 10M14.500 3c3 4 3 10 0 14" /></Svg></div>
        <div className="ml-[13px]"><Svg w={18} h={22}><path d="M1 1h4v14H1zM5 2h12v12H9" /><path d="M2.500 4h1M9 17h5v-3M8 20h7" strokeWidth={2} /></Svg></div>
        <svg width="12" height="7" viewBox="0 0 12 7" className="ml-[13px]"><path d="M0 7h12L6 0z" fill={D} /></svg>
        <div className="w-[88px] ml-[7px] flex flex-col items-center leading-none pt-[1px]">
          <span className="text-[24px] font-light text-[#2c2f33] leading-[24px]">10:13</span>
          <span className="text-[18.5px] font-light text-[#2c2f33] leading-[20px]">15.01.21</span>
        </div>
        <div className="ml-[11px] mr-[12px] w-[23px] h-[24px] border border-[#232629] flex flex-col justify-end shrink-0"><div className="h-px bg-[#232629] mx-[1px] mb-[2px]" /></div>
      </div>
    </div>
  );
}
